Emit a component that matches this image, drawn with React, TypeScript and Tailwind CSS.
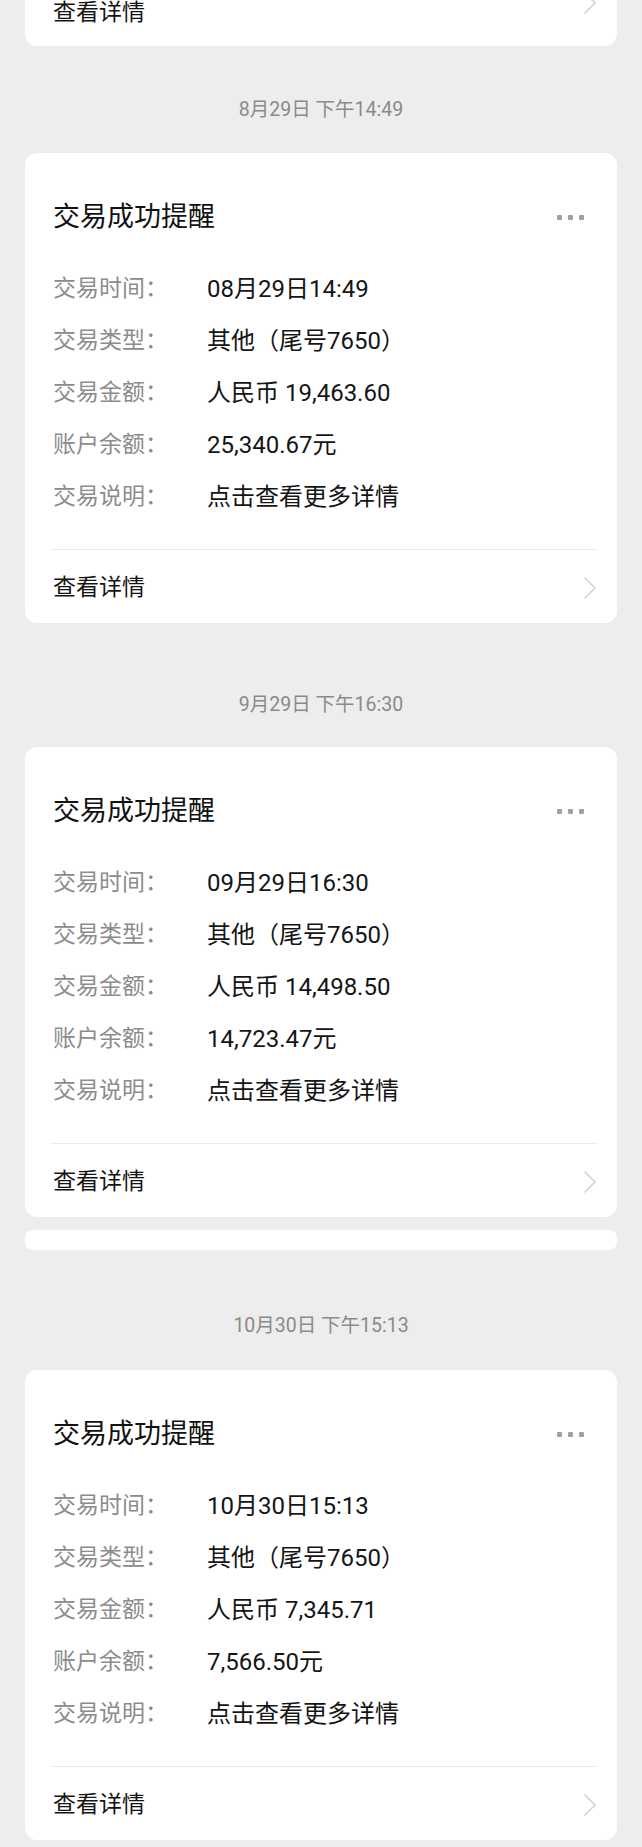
const font = { fontFamily: 'Roboto, "Noto Sans CJK SC", sans-serif' };

type Tx = {
  time: string;
  type: string;
  amount: string;
  balance: string;
};

function Dots() {
  return (
    <div className="flex items-center gap-[6px] pr-[2px]">
      <span className="w-[5px] h-[5px] rounded-[1px] bg-[#a0a0a0]" />
      <span className="w-[5px] h-[5px] rounded-[1px] bg-[#a0a0a0]" />
      <span className="w-[5px] h-[5px] rounded-[1px] bg-[#a0a0a0]" />
    </div>
  );
}

function Chevron() {
  return (
    <svg width="14" height="24" viewBox="0 0 14 24" fill="none" className="mr-[-4px]">
      <path d="M2 2 L12 12 L2 22" stroke="#d2d2d2" strokeWidth="1.6" strokeLinecap="round" strokeLinejoin="round" />
    </svg>
  );
}

function Row({ label, value }: { label: string; value: string }) {
  return (
    <div className="flex items-center h-[52px]">
      <span className="w-[154px] text-[23px] text-[#8c8c8c]">{label}</span>
      <span className="text-[24px] text-[#151515]">{value}</span>
    </div>
  );
}

function Card({ tx }: { tx: Tx }) {
  return (
    <div className="mx-[25px] bg-white rounded-[12px]">
      <div className="flex items-center justify-between pl-[28px] pr-[31px] pt-[48px]">
        <span className="text-[27px] leading-[32px] text-[#111]">交易成功提醒</span>
        <Dots />
      </div>
      <div className="pl-[28px] pt-[30px] pb-[26px]">
        <Row label="交易时间：" value={tx.time} />
        <Row label="交易类型：" value={tx.type} />
        <Row label="交易金额：" value={tx.amount} />
        <Row label="账户余额：" value={tx.balance} />
        <Row label="交易说明：" value="点击查看更多详情" />
      </div>
      <div className="ml-[25px] mr-[19px] h-px bg-[#ececec]" />
      <div className="flex items-center justify-between pl-[28px] pr-[24px] pt-[25px] pb-[22px]">
        <span className="text-[23px] leading-[26px] text-[#141414]">查看详情</span>
        <Chevron />
      </div>
    </div>
  );
}

function Stamp({ text, top, bottom }: { text: string; top: string; bottom: string }) {
  return (
    <div className={`${top} ${bottom} text-center text-[19.5px] leading-[24px] text-[#8a8a8a]`}>{text}</div>
  );
}

export default function App() {
  const txs: Tx[] = [
    { time: '08月29日14:49', type: '其他（尾号7650）', amount: '人民币 19,463.60', balance: '25,340.67元' },
    { time: '09月29日16:30', type: '其他（尾号7650）', amount: '人民币 14,498.50', balance: '14,723.47元' },
    { time: '10月30日15:13', type: '其他（尾号7650）', amount: '人民币 7,345.71', balance: '7,566.50元' },
  ];

  return (
    <div className="min-h-screen bg-[#ededed] pb-[7px]" style={font}>
      {/* card cut off at the top */}
      <div className="mx-[25px] bg-white rounded-b-[12px] flex items-start justify-between pl-[28px] pr-[24px] pb-[20px]">
        <span className="text-[23px] leading-[26px] text-[#141414]">查看详情</span>
        <div className="-mt-[9px]">
          <Chevron />
        </div>
      </div>

      <Stamp text="8月29日 下午14:49" top="pt-[52px]" bottom="pb-[31px]" />
      <Card tx={txs[0]} />

      <Stamp text="9月29日 下午16:30" top="pt-[70px]" bottom="pb-[30px]" />
      <Card tx={txs[1]} />

      <div className="mx-[25px] mt-[13px] h-[20px] bg-white rounded-[8px]" />

      <Stamp text="10月30日 下午15:13" top="pt-[64px]" bottom="pb-[32px]" />
      <Card tx={txs[2]} />
    </div>
  );
}
